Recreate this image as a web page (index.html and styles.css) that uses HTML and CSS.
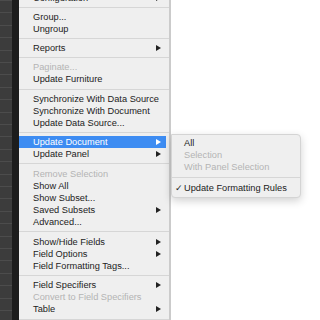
FILE: index.html
```html
<!DOCTYPE html>
<html>
<head>
  <meta charset="UTF-8">
  <title>Menu</title>
  <link rel="stylesheet" href="styles.css">
</head>
<body>
  <div class="screen">
    <div class="table"></div>
    <div class="gutter"></div>

    <div class="menu">
      <div class="menu-list">
        <div class="item">Configuration<span class="arrow"></span></div>
        <div class="sep"></div>
        <div class="item">Group...</div>
        <div class="item">Ungroup</div>
        <div class="sep"></div>
        <div class="item">Reports<span class="arrow"></span></div>
        <div class="sep"></div>
        <div class="item disabled">Paginate...</div>
        <div class="item">Update Furniture</div>
        <div class="sep"></div>
        <div class="item">Synchronize With Data Source</div>
        <div class="item">Synchronize With Document</div>
        <div class="item">Update Data Source...</div>
        <div class="sep"></div>
        <div class="item active">Update Document<span class="arrow"></span></div>
        <div class="item">Update Panel<span class="arrow"></span></div>
        <div class="sep"></div>
        <div class="item disabled">Remove Selection</div>
        <div class="item">Show All</div>
        <div class="item">Show Subset...</div>
        <div class="item">Saved Subsets<span class="arrow"></span></div>
        <div class="item">Advanced...</div>
        <div class="sep"></div>
        <div class="item">Show/Hide Fields<span class="arrow"></span></div>
        <div class="item">Field Options<span class="arrow"></span></div>
        <div class="item">Field Formatting Tags...</div>
        <div class="sep"></div>
        <div class="item">Field Specifiers<span class="arrow"></span></div>
        <div class="item disabled">Convert to Field Specifiers</div>
        <div class="item">Table<span class="arrow"></span></div>
        <div class="sep"></div>
      </div>
    </div>

    <!-- submenu of Update Document -->
    <div class="submenu">
      <div class="item">All</div>
      <div class="item disabled">Selection</div>
      <div class="item disabled">With Panel Selection</div>
      <div class="sep"></div>
      <div class="item"><span class="check">✓</span>Update Formatting Rules</div>
    </div>
  </div>
</body>
</html>
```

FILE: styles.css
```css
body {
  margin: 0;
  width: 320px;
  height: 320px;
  overflow: hidden;
  background: #fff;
  font-family: "Liberation Sans", Arial, sans-serif;
  font-size: 9.25px;
  color: #222;
}

.screen {
  position: relative;
  display: flex;
  height: 320px;
}

.table {
  width: 12px;
  background: repeating-linear-gradient(to bottom, #4c4c4c 0 1px, #3c3c3c 1px 12.4px);
}

.gutter {
  width: 7px;
  background: #1c1c1c;
}

.menu {
  width: 150px;
  background: #efefef;
  border-right: 2px solid #cbcbcb;
  overflow: hidden;
}

.menu-list {
  margin-top: -8.6px;
}

.item {
  position: relative;
  display: flex;
  align-items: center;
  justify-content: space-between;
  height: 12.2px;
  padding: 0 8px 0 14px;
  white-space: nowrap;
}

.item.disabled {
  color: #b4b4b4;
}

.item.active {
  color: #fff;
  background: linear-gradient(to left, transparent 2.5px, #3d8cf2 2.5px);
}

.arrow {
  width: 0;
  height: 0;
  border-left: 5px solid #222;
  border-top: 3px solid transparent;
  border-bottom: 3px solid transparent;
}

.active .arrow {
  border-left-color: #fff;
}

.sep {
  display: flex;
  align-items: center;
  height: 7px;
}

.sep::after {
  content: "";
  flex: 1;
  height: 1px;
  background: #d6d6d6;
}

.submenu {
  position: absolute;
  left: 171px;
  top: 134px;
  width: 128px;
  padding: 2px 0 3px;
  background: #efefef;
  border: 1px solid #d4d4d4;
  border-radius: 0 4px 4px 4px;
  box-shadow: 0 3px 8px rgba(0, 0, 0, 0.18);
}

.submenu .item {
  padding-left: 12px;
}

.submenu .sep {
  height: 8px;
}

.check {
  position: absolute;
  left: 3px;
  font-family: "DejaVu Sans", sans-serif;
  font-size: 9px;
}
```
